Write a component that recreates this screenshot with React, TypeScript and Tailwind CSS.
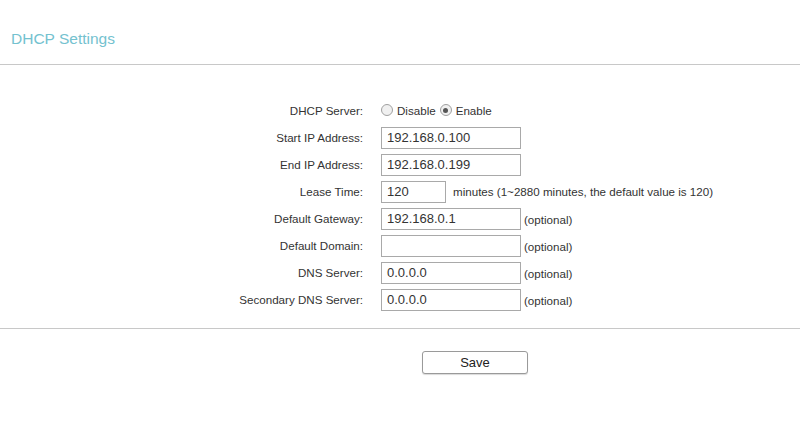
const rows = [
  { label: 'Start IP Address:', value: '192.168.0.100' },
  { label: 'End IP Address:', value: '192.168.0.199' },
];
const rows2 = [
  { label: 'Default Gateway:', value: '192.168.0.1' },
  { label: 'Default Domain:', value: '' },
  { label: 'DNS Server:', value: '0.0.0.0' },
  { label: 'Secondary DNS Server:', value: '0.0.0.0' },
];

function Radio({ checked }: { checked?: boolean }) {
  return (
    <span className="inline-flex w-[12px] h-[12px] rounded-full border border-[#a0a0a0] bg-[#f0f0f0] items-center justify-center">
      {checked && <span className="w-[5px] h-[5px] rounded-full bg-[#555]" />}
    </span>
  );
}

function Row({ label, children }: { label: string; children: React.ReactNode }) {
  return (
    <div className="flex items-center h-[27px]">
      <div className="w-[364px] text-right pr-[1px]">{label}</div>
      <div className="ml-[17px] flex items-center">{children}</div>
    </div>
  );
}

function Field({ value, w = 'w-[140px]' }: { value: string; w?: string }) {
  return (
    <div className={`${w} h-[22px] border border-[#a9a9a9] bg-white px-[5px] flex items-center text-[13px] text-[#333]`}>
      {value}
    </div>
  );
}

export default function App() {
  return (
    <div className="w-[800px] h-[431px] bg-white text-[11.6px] text-[#333]" style={{ fontFamily: '"Liberation Sans", Arial, sans-serif' }}>
      <div className="h-[65px] pt-[27px] pl-[11px] border-b border-[#c8c8c8]">
        <div className="text-[15.5px] text-[#74c2cf]">DHCP Settings</div>
      </div>
      <div className="pt-[32px] pb-[15px] border-b border-[#c8c8c8]">
        <Row label="DHCP Server:">
          <Radio />
          <span className="ml-[4px] mr-[4px]">Disable</span>
          <Radio checked />
          <span className="ml-[4px]">Enable</span>
        </Row>
        {rows.map(r => (
          <Row key={r.label} label={r.label}><Field value={r.value} /></Row>
        ))}
        <Row label="Lease Time:">
          <Field value="120" w="w-[65px]" />
          <span className="ml-[7px]">minutes (1~2880 minutes, the default value is 120)</span>
        </Row>
        {rows2.map(r => (
          <Row key={r.label} label={r.label}>
            <Field value={r.value} />
            <span className="ml-[3px] mt-[2px]">(optional)</span>
          </Row>
        ))}
      </div>
      <div className="flex pt-[22px] pl-[422px]">
        <button className="w-[106px] h-[23px] border border-[#9a9a9a] rounded-[3px] bg-white text-[13px] text-[#222] shadow-[0_1px_1px_rgba(0,0,0,0.15)]">Save</button>
      </div>
    </div>
  );
}
